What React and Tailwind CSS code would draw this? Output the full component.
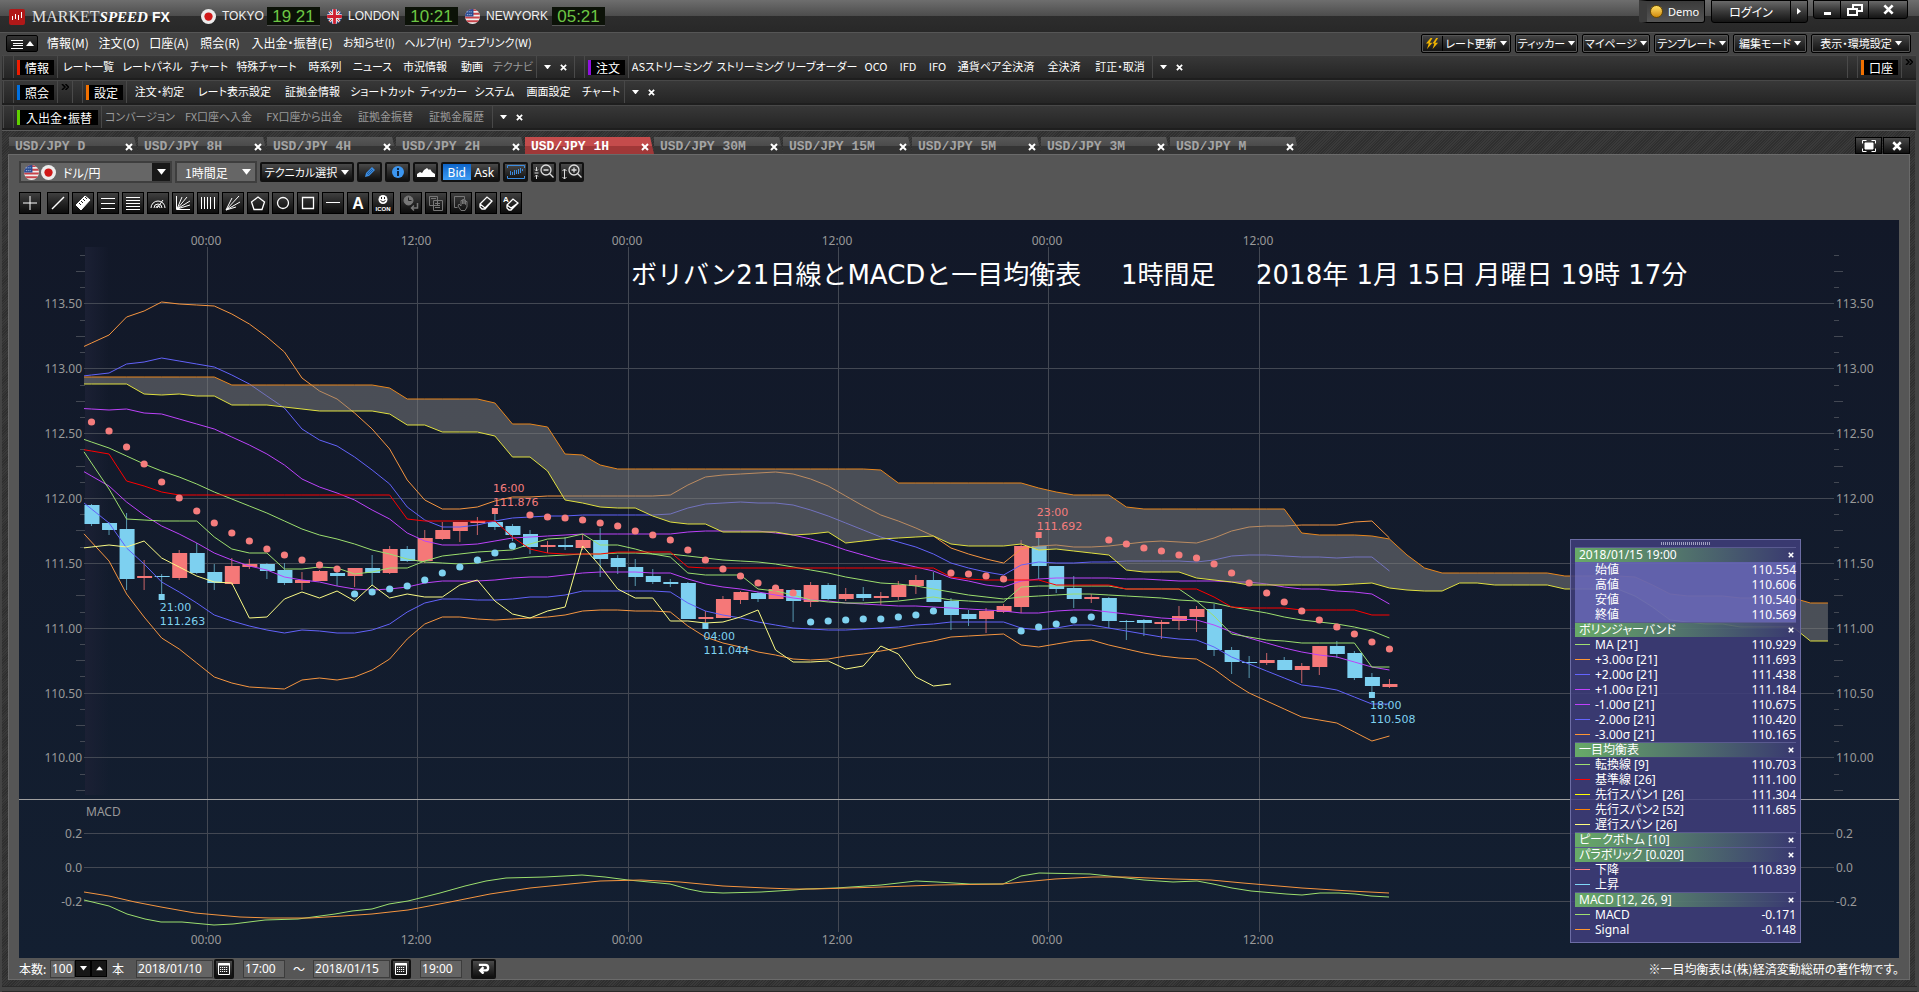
import React, { useState } from 'react';
import clsx from 'clsx';

const menus = [
  ['情報(M)', 'w-[52px]'],
  ['注文(O)', 'w-[50px]'],
  ['口座(A)', 'w-[50px]'],
  ['照会(R)', 'w-[52px]'],
  ['入出金・振替(E)', 'w-[92px]'],
  ['お知らせ(I)', 'w-[62px] text-[11px]'],
  ['ヘルプ(H)', 'w-[56px] text-[11px]'],
  ['ウェブリンク(W)', 'w-[77px] text-[11px]'],
];

const quickMenus = [
  ['ティッカー', 'w-[63px]'],
  ['マイページ', 'w-[68px]'],
  ['テンプレート', 'w-[75px]'],
  ['編集モード', 'w-[74px]'],
  ['表示・環境設定', 'w-[100px]'],
];

const infoItems = [
  ['レート一覧', 'w-[61px]'],
  ['レートパネル', 'w-[67px]'],
  ['チャート', 'w-[46px]'],
  ['特殊チャート', 'w-[69px]'],
  ['時系列', 'w-[48px]'],
  ['ニュース', 'w-[47px]'],
  ['市況情報', 'w-[58px]'],
  ['動画', 'w-[36px]'],
  ['テクナビ', 'w-[46px] text-[#9a9a9a]'],
];

const orderItems = [
  ['ASストリーミング', 'w-[86px]'],
  ['ストリーミング', 'w-[70px]'],
  ['リーブオーダー', 'w-[74px]'],
  ['OCO', 'w-[34px]'],
  ['IFD', 'w-[30px]'],
  ['IFO', 'w-[29px]'],
  ['通貨ペア全決済', 'w-[88px]'],
  ['全決済', 'w-[48px]'],
  ['訂正・取消', 'w-[64px]'],
];

const settingItems = [
  ['注文・約定', 'w-[65px]'],
  ['レート表示設定', 'w-[85px]'],
  ['証拠金情報', 'w-[71px]'],
  ['ショートカット', 'w-[69px]'],
  ['ティッカー', 'w-[53px]'],
  ['システム', 'w-[49px]'],
  ['画面設定', 'w-[59px]'],
  ['チャート', 'w-[46px]'],
];

const cashItems = [
  ['コンバージョン', 'w-[76px] text-[#9a9a9a]'],
  ['FX口座へ入金', 'w-[81px] text-[#9a9a9a]'],
  ['FX口座から出金', 'w-[91px] text-[#9a9a9a]'],
  ['証拠金振替', 'w-[71px] text-[#9a9a9a]'],
  ['証拠金履歴', 'w-[71px] text-[#9a9a9a]'],
];

const tabs = ['D', '8H', '4H', '2H', '1H', '30M', '15M', '5M', '3M', 'M'];

// Chart data, one value per hour
const bands = [
  {
    color: '#f59540',
    ys: [342, 334, 316, 310, 301, 303, 304, 305, 313, 323, 336, 351, 377, 390, 398, 412, 428, 448, 479, 499, 508, 508, 506, 500, 496, 496, 495, 495, 495, 495, 495, 495, 495, 494, 484, 476, 474, 473, 472, 471, 473, 478, 485, 495, 505, 514, 520, 527, 535, 547, 553, 558, 562, 548, 545, 544, 546, 546, 545, 543, 541, 540, 541, 542, 537, 530, 526, 525, 525, 524, 524, 524, 521, 520, 537],
  },
  {
    color: '#6262fa',
    ys: [374, 372, 363, 361, 357, 360, 363, 366, 374, 383, 395, 407, 428, 439, 445, 456, 469, 483, 506, 519, 526, 526, 524, 520, 517, 516, 515, 515, 514, 514, 514, 514, 514, 513, 507, 503, 502, 501, 502, 502, 504, 509, 515, 522, 529, 536, 541, 546, 553, 562, 567, 571, 574, 564, 561, 562, 562, 561, 561, 560, 560, 560, 560, 561, 559, 555, 554, 554, 555, 556, 556, 557, 556, 556, 570],
  },
  {
    color: '#bc42fa',
    ys: [408, 409, 408, 412, 413, 418, 423, 428, 436, 444, 453, 464, 478, 486, 492, 499, 509, 518, 532, 540, 544, 544, 543, 540, 537, 536, 535, 534, 533, 533, 533, 533, 533, 533, 531, 530, 530, 530, 530, 532, 534, 538, 543, 549, 554, 559, 562, 566, 570, 577, 580, 584, 586, 580, 578, 577, 577, 577, 577, 578, 578, 579, 580, 580, 580, 581, 581, 583, 586, 588, 588, 590, 591, 593, 603],
  },
  {
    color: '#9cde6e',
    ys: [441, 447, 455, 463, 470, 476, 483, 491, 498, 505, 512, 520, 528, 534, 538, 543, 549, 553, 558, 561, 562, 563, 562, 559, 558, 556, 555, 554, 553, 553, 552, 552, 553, 553, 555, 557, 559, 560, 561, 563, 566, 569, 572, 576, 579, 582, 583, 585, 588, 591, 594, 596, 598, 596, 595, 594, 593, 593, 594, 595, 596, 597, 599, 600, 602, 606, 609, 612, 616, 619, 621, 623, 626, 630, 637],
  },
  {
    color: '#bc42fa',
    ys: [475, 485, 501, 514, 525, 533, 542, 552, 559, 565, 569, 576, 579, 581, 585, 588, 589, 588, 586, 582, 580, 580, 580, 579, 577, 576, 576, 574, 572, 571, 571, 571, 572, 572, 578, 583, 586, 588, 591, 594, 597, 599, 600, 602, 603, 604, 605, 605, 606, 607, 608, 609, 610, 612, 612, 610, 609, 609, 611, 613, 615, 617, 618, 619, 624, 631, 637, 642, 647, 651, 654, 656, 661, 666, 669],
  },
  {
    color: '#6262fa',
    ys: [508, 522, 547, 563, 581, 591, 602, 614, 620, 625, 629, 632, 629, 630, 632, 632, 629, 623, 611, 602, 598, 598, 599, 599, 598, 596, 596, 594, 590, 590, 590, 590, 590, 591, 602, 610, 614, 617, 621, 624, 627, 628, 629, 629, 628, 627, 626, 624, 623, 621, 621, 621, 621, 627, 629, 627, 624, 624, 627, 630, 633, 636, 638, 639, 646, 656, 663, 670, 677, 684, 686, 689, 696, 703, 703],
  },
  {
    color: '#f59540',
    ys: [541, 560, 593, 616, 637, 648, 662, 676, 682, 686, 687, 688, 679, 677, 679, 676, 669, 658, 638, 623, 616, 616, 618, 619, 618, 617, 616, 614, 610, 609, 609, 610, 610, 611, 625, 636, 642, 646, 651, 654, 658, 659, 658, 655, 653, 650, 647, 643, 640, 636, 635, 634, 633, 644, 646, 643, 640, 639, 644, 648, 652, 655, 657, 658, 668, 681, 692, 700, 708, 716, 719, 722, 731, 740, 735],
  },
  {
    // 転換線
    color: '#9cde6e',
    ys: [462, 488, 518, 519, 520, 520, 520, 536, 548, 552, 552, 568, 568, 566, 567, 573, 571, 567, 567, 560, 555, 553, 551, 550, 549, 543, 538, 537, 533, 544, 544, 548, 553, 556, 572, 574, 574, 574, 588, 590, 594, 599, 601, 602, 602, 601, 600, 598, 596, 599, 600, 601, 601, 586, 585, 585, 585, 585, 585, 588, 588, 588, 588, 600, 615, 633, 636, 639, 640, 642, 642, 642, 642, 666, 666],
  },
  {
    // 基準線
    color: '#ff0000',
    ys: [450, 453, 480, 485, 491, 494, 494, 494, 494, 494, 494, 494, 494, 494, 494, 494, 494, 494, 518, 520, 520, 520, 520, 520, 536, 548, 552, 553, 553, 553, 551, 551, 551, 551, 566, 567, 567, 567, 567, 567, 567, 567, 567, 567, 567, 567, 567, 567, 567, 576, 578, 579, 579, 579, 579, 584, 584, 584, 584, 588, 588, 588, 588, 588, 596, 606, 607, 607, 607, 609, 609, 609, 609, 614, 614],
  },
  {
    // 遅行スパン
    color: '#fafa84',
    ys: [546, 544, 546, 540, 557, 566, 575, 581, 582, 617, 616, 598, 591, 597, 590, 600, 584, 597, 593, 596, 596, 584, 579, 600, 613, 617, 610, 606, 545, 565, 588, 597, 597, 620, 620, 622, 621, 616, 609, 649, 661, 661, 660, 668, 665, 645, 653, 676, 685, 683],
  },
];

const spanA = [383, 383, 383, 393, 394, 393, 395, 395, 404, 404, 404, 406, 408, 410, 410, 410, 410, 413, 424, 424, 431, 431, 431, 435, 456, 456, 470, 499, 502, 506, 507, 507, 515, 521, 523, 523, 531, 531, 531, 531, 534, 533, 531, 542, 540, 538, 537, 536, 535, 543, 545, 545, 545, 543, 549, 548, 550, 552, 554, 569, 571, 571, 571, 577, 579, 581, 584, 584, 584, 584, 584, 584, 583, 582, 587, 589, 590, 590, 582, 582, 584, 584, 584, 584, 588, 588, 588, 588, 595, 606, 619, 621, 623, 623, 626, 626, 626, 626, 640, 640];
const spanB = [376, 376, 376, 376, 376, 376, 376, 376, 384, 384, 384, 384, 384, 384, 384, 384, 384, 387, 398, 398, 398, 398, 398, 402, 423, 423, 426, 453, 454, 464, 468, 468, 468, 468, 468, 468, 468, 468, 468, 468, 468, 468, 468, 468, 468, 469, 482, 482, 482, 482, 482, 482, 482, 482, 487, 491, 494, 494, 494, 506, 508, 508, 508, 508, 508, 508, 508, 508, 508, 532, 534, 534, 534, 535, 538, 554, 567, 572, 572, 572, 572, 572, 572, 572, 575, 575, 575, 575, 576, 584, 593, 595, 595, 595, 597, 597, 597, 597, 602, 602];

// high, body top, body bottom, low, rising
const candles = [
  [503, 504, 523, 525, 0], [521, 522, 529, 534, 0], [512, 528, 578, 589, 0], [559, 575, 577, 589, 1], [573, 575, 576, 598, 0],
  [549, 552, 577, 579, 1], [542, 552, 572, 573, 0], [563, 571, 582, 589, 0], [557, 565, 583, 584, 1], [558, 563, 566, 568, 1],
  [562, 563, 570, 578, 0], [562, 569, 582, 584, 0], [571, 579, 582, 589, 1], [569, 570, 580, 580, 1], [571, 572, 575, 585, 0],
  [567, 567, 575, 586, 1], [554, 567, 572, 585, 0], [545, 548, 572, 573, 1], [545, 548, 560, 561, 0], [529, 537, 560, 562, 1],
  [521, 529, 538, 539, 1], [521, 521, 530, 541, 1], [516, 520, 522, 534, 1], [510, 521, 526, 529, 0], [523, 525, 534, 540, 0],
  [529, 533, 546, 553, 0], [540, 544, 546, 552, 1], [536, 544, 546, 549, 0], [533, 539, 547, 549, 1], [527, 539, 558, 576, 0],
  [554, 557, 566, 573, 0], [558, 566, 576, 585, 0], [568, 575, 581, 583, 0], [578, 581, 583, 586, 0], [581, 582, 618, 618, 0],
  [610, 616, 618, 622, 1], [595, 598, 617, 617, 1], [590, 591, 599, 603, 1], [591, 592, 598, 601, 0], [585, 588, 598, 598, 1],
  [589, 589, 600, 621, 0], [581, 584, 601, 606, 1], [582, 584, 598, 599, 0], [587, 593, 598, 600, 1], [586, 593, 597, 600, 0],
  [591, 595, 597, 604, 1], [580, 584, 596, 599, 1], [574, 579, 585, 593, 1], [571, 579, 601, 601, 0], [597, 600, 614, 629, 0],
  [609, 613, 618, 625, 0], [607, 610, 618, 632, 1], [603, 605, 611, 612, 1], [539, 545, 606, 612, 1], [537, 545, 565, 578, 0],
  [565, 565, 588, 592, 0], [575, 587, 598, 607, 0], [593, 596, 598, 602, 1], [596, 597, 620, 627, 0], [619, 620, 621, 639, 0],
  [618, 619, 622, 635, 0], [619, 621, 623, 638, 1], [605, 615, 620, 629, 1], [605, 608, 616, 631, 1], [603, 608, 649, 655, 0],
  [646, 649, 661, 673, 0], [655, 661, 662, 677, 0], [652, 659, 662, 664, 1], [656, 659, 669, 669, 0], [662, 665, 669, 682, 1],
  [645, 645, 666, 674, 1], [640, 645, 653, 657, 0], [650, 652, 677, 679, 0], [672, 676, 685, 692, 0], [678, 683, 686, 687, 1],
];

const sar = [
  { from: 0, color: '#f57d7d', ys: [421, 430, 446, 463, 481, 497, 510, 522, 532, 540, 548, 554, 559, 564, 568] },
  { from: 15, color: '#7fd2f0', ys: [593, 591, 588, 585, 579, 572, 566, 559, 552, 545] },
  { from: 25, color: '#f57d7d', ys: [514, 516, 517, 519, 522, 525, 530, 534, 539, 549, 559, 568, 575, 582, 587, 592] },
  { from: 41, color: '#7fd2f0', ys: [621, 620, 619, 618, 618, 616, 614, 610] },
  { from: 49, color: '#f57d7d', ys: [572, 573, 575, 578] },
  { from: 53, color: '#7fd2f0', ys: [630, 626, 623, 619, 616] },
  { from: 58, color: '#f57d7d', ys: [539, 543, 547, 550, 554, 557, 563, 572, 582, 592, 601, 610, 619, 626, 633, 641, 648] },
];

const peaks = [
  { i: 4, y: 596, time: '21:00', price: '111.263', color: '#7fd2f0', ty: 610 },
  { i: 23, y: 510, time: '16:00', price: '111.876', color: '#f57d7d', ty: 491 },
  { i: 35, y: 625, time: '04:00', price: '111.044', color: '#7fd2f0', ty: 639 },
  { i: 54, y: 534, time: '23:00', price: '111.692', color: '#f57d7d', ty: 515 },
  { i: 73, y: 694, time: '18:00', price: '110.508', color: '#7fd2f0', ty: 708 },
];

const macd = '84,899 109,905 127,913 145,918 161,921 182,921 214,924 233,923 265,919 298,918 335,913 352,910 372,908 389,903 408,900 440,892 465,885 486,880 506,877 545,876 582,874 605,876 628,879 670,883 688,888 703,891 723,892 761,891 793,889 806,888 836,887 881,884 916,880 937,881 970,883 1003,883 1021,875 1039,872 1090,873 1109,875 1144,879 1173,881 1197,880 1213,883 1232,887 1251,890 1286,893 1302,894 1320,892 1339,892 1355,893 1371,895 1389,896';
const signal = '84,891 109,895 135,901 161,906 195,912 240,916 270,917 310,917 343,915 372,913 408,909 450,901 490,893 530,887 570,883 600,880 641,879 680,881 723,885 766,887 793,888 814,888 881,886 937,884 1002,883 1055,878 1093,876 1125,876 1173,878 1211,879 1243,882 1302,887 1350,890 1389,892';

const hours = [
  [207, '00:00'],
  [417, '12:00'],
  [628, '00:00'],
  [838, '12:00'],
  [1048, '00:00'],
  [1259, '12:00'],
];
const prices = [
  [302, '113.50'],
  [367, '113.00'],
  [432, '112.50'],
  [497, '112.00'],
  [562, '111.50'],
  [627, '111.00'],
  [692, '110.50'],
  [756, '110.00'],
];
const macdLevels = [
  [832, '0.2'],
  [866, '0.0'],
  [900, '-0.2'],
];

const legend = [
  { head: '2018/01/15 19:00' },
  { name: '始値', value: '110.554', hot: true },
  { name: '高値', value: '110.606', hot: true },
  { name: '安値', value: '110.540', hot: true },
  { name: '終値', value: '110.569', hot: true },
  { head: 'ボリンジャーバンド' },
  { name: 'MA [21]', value: '110.929', line: 'bg-[#a0e070]' },
  { name: '+3.00σ [21]', value: '111.693', line: 'bg-[#ff9632]' },
  { name: '+2.00σ [21]', value: '111.438', line: 'bg-[#6464ff]' },
  { name: '+1.00σ [21]', value: '111.184', line: 'bg-[#c040ff]' },
  { name: '-1.00σ [21]', value: '110.675', line: 'bg-[#c040ff]' },
  { name: '-2.00σ [21]', value: '110.420', line: 'bg-[#6464ff]' },
  { name: '-3.00σ [21]', value: '110.165', line: 'bg-[#ff9632]' },
  { head: '一目均衡表' },
  { name: '転換線 [9]', value: '110.703', line: 'bg-[#a0e070]' },
  { name: '基準線 [26]', value: '111.100', line: 'bg-[#ff0000]' },
  { name: '先行スパン1 [26]', value: '111.304', line: 'bg-[#ffff00]' },
  { name: '先行スパン2 [52]', value: '111.685', line: 'bg-[#ff8000]' },
  { name: '遅行スパン [26]', value: '', line: 'bg-[#ffff80]' },
  { head: 'ピークボトム [10]' },
  { head: 'パラボリック [0.020]' },
  { name: '下降', value: '110.839', line: 'bg-[#ff8080]' },
  { name: '上昇', value: '', line: 'bg-[#80d8f8]' },
  { head: 'MACD [12, 26, 9]' },
  { name: 'MACD', value: '-0.171', line: 'bg-[#a0e070]' },
  { name: 'Signal', value: '-0.148', line: 'bg-[#ff9632]' },
];

const px = (i) => 91.5 + 17.54 * i;

const linePoints = (ys) => {
  const lead = `84,${ys[0] - (ys[1] - ys[0]) * 0.43}`;
  return [lead, ...ys.map((y, i) => `${px(i)},${y}`)].join(' ');
};

const cloudPoints = [
  `84,${spanB[0]}`,
  ...spanB.map((y, i) => `${px(i)},${y}`),
  ...spanA.map((y, i) => `${px(i)},${y}`).reverse(),
  `84,${spanA[0]}`,
].join(' ');

const Down = ({ className = 'w-[7px]' }) => (
  <svg viewBox="0 0 8 5" className={clsx('shrink-0', className)} aria-hidden="true">
    <path d="M0 0h8L4 5z" fill="currentColor" />
  </svg>
);

const Cross = ({ className = 'w-[8px]' }) => (
  <svg viewBox="0 0 8 8" className={clsx('shrink-0', className)} aria-hidden="true">
    <path d="M1 1l6 6M7 1L1 7" stroke="currentColor" strokeWidth="2" />
  </svg>
);

const FlagJp = () => (
  <svg viewBox="0 0 16 16" className="w-[15px] shrink-0" aria-hidden="true">
    <circle cx="8" cy="8" r="8" fill="#ececec" />
    <circle cx="8" cy="8" r="4.400" fill="#d01818" />
  </svg>
);

const FlagUs = () => (
  <svg viewBox="0 0 16 16" className="w-[15px] shrink-0" aria-hidden="true">
    <clipPath id="us">
      <circle cx="8" cy="8" r="8" />
    </clipPath>
    <g clipPath="url(#us)">
      <path d="M0 0h16v16H0z" fill="#eee" />
      <path d="M0 1h16M0 5h16M0 9h16M0 13h16" stroke="#c8434a" strokeWidth="2" />
      <path d="M0 0h9v8H0z" fill="#2a4d94" />
      <path d="M2 3h6M2 6h6" stroke="#cdd6ea" strokeDasharray="1 1" />
    </g>
  </svg>
);

const FlagUk = () => (
  <svg viewBox="0 0 16 16" className="w-[15px] shrink-0" aria-hidden="true">
    <clipPath id="uk">
      <circle cx="8" cy="8" r="8" />
    </clipPath>
    <g clipPath="url(#uk)">
      <path d="M0 0h16v16H0z" fill="#28427f" />
      <path d="M0 0l16 16M16 0L0 16" stroke="#ddd" strokeWidth="3" />
      <path d="M0 0l16 16M16 0L0 16" stroke="#c33" />
      <path d="M8 0v16M0 8h16" stroke="#eee" strokeWidth="5" />
      <path d="M8 0v16M0 8h16" stroke="#cf2030" strokeWidth="3" />
    </g>
  </svg>
);

const Clock = ({ flag, city, time, pitch }) => (
  <div className={clsx('flex items-center', pitch)}>
    {flag}
    <span className="ml-[6px] flex-1 font-['Liberation_Sans',sans-serif] text-[12px] text-[#f0f0f0]">{city}</span>
    <time className="h-[19px] w-[53px] whitespace-pre border-b border-[#555] bg-[#0c1208] text-center font-['Liberation_Sans',sans-serif] text-[17px] leading-[19px] text-[#6cc644]">
      {time}
    </time>
  </div>
);

const Grip = () => (
  <span className="h-[16px] w-[5px] shrink-0 bg-[radial-gradient(circle,#777_35%,transparent_40%)] bg-[length:2px_2px]" />
);

const Group = ({ title, bar, label, items, close, more }) => (
  <div className="flex h-full items-center border-l border-[#4a4a4a] pl-[2px]">
    <Grip />
    <div className="ml-[2px] flex h-full items-center border-x border-[#484848] px-[3px]">
      <span className={clsx('flex h-[15px] items-center justify-center border-l-[3px] bg-black text-[12px]', bar, label)}>
        {title}
      </span>
    </div>
    {items && <ToolItems items={items} />}
    {close && (
      <div className="flex h-full items-center gap-[9px] border-l border-[#484848] px-[7px]">
        <button aria-label="メニュー"><Down /></button>
        <button aria-label="閉じる"><Cross className="w-[7px]" /></button>
      </div>
    )}
    {more && (
      <button aria-label="さらに表示" className="flex h-full w-[14px] justify-center pt-[3px]">
        <svg viewBox="0 0 8 6" className="h-[6px] w-[8px]" fill="none" stroke="#000" strokeWidth="1.500">
          <path d="M1 0l3 3-3 3M4.500 0l3 3-3 3" />
        </svg>
      </button>
    )}
  </div>
);

const ToolItems = ({ items }) => (
  <>
    {items.map(([label, cls]) => (
      <button key={label} className={clsx('flex shrink-0 justify-center whitespace-nowrap pb-[2px]', cls)}>
        {label}
      </button>
    ))}
  </>
);

const ToolRow = ({ children }) => (
  <div className="flex h-[25px] items-center border-b-2 border-[#1e1e1e] border-t border-t-[#484848] bg-linear-to-b from-[#383838] to-[#252525] pl-[1px]">
    {children}
  </div>
);

const TopButton = ({ children, className }) => (
  <button
    className={clsx(
      'flex h-[19px] items-center justify-center gap-[3px] whitespace-nowrap rounded-[2px] border border-black bg-linear-to-b from-[#464646] to-[#111] shadow-[inset_0_0_0_1px_#555]',
      className
    )}
  >
    {children}
  </button>
);

const IconButton = ({ label, children, className = 'w-[25px]' }) => (
  <button
    aria-label={label}
    className={clsx(
      'flex h-[20px] items-center justify-center rounded-[2px] border-2 border-[#111] bg-linear-to-b from-[#4a4a4a] to-[#101010]',
      className
    )}
  >
    {children}
  </button>
);

const drawTools = [
  { name: '十字', path: <path d="M8 1v14M1 8h14" /> },
  { name: '直線', path: <path d="M2 14L14 2" strokeWidth="1.5" />, gap: true },
  {
    name: '定規',
    path: (
      <>
        <path d="M1 10L10 1l5 4-9 10z" fill="#fff" />
        <path d="M4 8l2 2M6 6l2 2M8 4l2 2M10 2l2 2" stroke="#222" />
      </>
    ),
  },
  { name: '3本線', path: <path d="M1 3.5h14M1 8.5h14M1 13.5h14" /> },
  { name: '5本線', path: <path d="M1 2.5h14M1 5.5h14M1 8.5h14M1 11.5h14M1 14.5h14" /> },
  { name: '円弧', path: <path d="M1 13a7 7 0 0 1 14 0M4 13a4 4 0 0 1 8 0M7 13L13 5M6 13a2 2 0 0 1 4 0" /> },
  { name: 'ファン', path: <path d="M1.500 1v13.500H15M2 14L7 2M2 14L12 2M2 14L15 6M2 14l13-4" /> },
  { name: '縦線', path: <path d="M1.500 2v12M4.500 2v12M7.500 2v12M10.500 2v12M14.500 2v12" /> },
  { name: '放射線', path: <path d="M1 15L7 3M1 15L14 1M1 15l14-8M1 15l10-3" /> },
  { name: '五角形', path: <path d="M8 2l6.500 5-2.500 7.500H4L1.500 7z" strokeWidth="1.3" /> },
  { name: '円', path: <circle cx="8" cy="8" r="5.500" strokeWidth="1.3" /> },
  { name: '四角形', path: <path d="M2.500 2.500h11v11h-11z" strokeWidth="1.3" /> },
  { name: '水平線', path: <path d="M1 7.500h14" /> },
  { name: '文字', text: 'A' },
  {
    name: 'アイコン',
    path: (
      <>
        <circle cx="8" cy="4.500" r="4.500" fill="#fff" stroke="none" />
        <path d="M5.500 5.500q2.500 3 5 0M6.500 2v2M9.500 2v2" stroke="#222" />
        <text x="8" y="16" fontSize="6" fontWeight="700" textAnchor="middle" fill="#fff" stroke="none">ICON</text>
      </>
    ),
  },
  {
    name: '履歴',
    gap: true,
    off: true,
    path: (
      <>
        <circle cx="5.500" cy="5.500" r="4.500" fill="#777" />
        <path d="M5.500 2.500v3h3" stroke="#222" />
        <path d="M14.500 8v5H9M11 10.500L8.500 13l2.500 2.500" strokeWidth="1.500" />
      </>
    ),
  },
  { name: 'コピー', off: true, path: <path d="M1.500 1.500h8v9h-8zM5.500 5.500h9v10h-9zM7 8.500h5M7 10.500h5M7 12.500h5M3 3.500h5" /> },
  { name: '移動', off: true, path: <path d="M1.500 1.500h10v3M1.500 1.500v11h3M6 9l2 2V5.500h1.500V9V4.500H11V9V5h1.500v4.500V6.500H14V12l-2 3.500H8L5 11z" /> },
  { name: '消去', path: <path d="M2 9l7-7 5 4-7 8H4l-2-2zM2 9l5 4 7-7" strokeWidth="1.3" /> },
  {
    name: '全消去',
    path: (
      <>
        <path d="M4 10l6-6 5 4-7 7H6l-2-2zM4 10l4 3 7-5" strokeWidth="1.3" />
        <text x="3" y="7" fontSize="8" fontWeight="700" textAnchor="middle" fill="#fff" stroke="none">A</text>
      </>
    ),
  },
];

const Calendar = () => (
  <svg viewBox="0 0 12 12" className="w-[12px]" aria-hidden="true">
    <path d="M.5.5h11v11H.5z" fill="none" stroke="#fff" />
    <path d="M0 1.500h12" stroke="#fff" strokeWidth="2" />
    <path d="M2 4.500h8M2 6.500h8M2 8.500h8" stroke="#fff" strokeDasharray="1.200 .8" />
  </svg>
);

const DateBox = ({ id, label, value, className }) => (
  <input
    id={id}
    aria-label={label}
    defaultValue={value}
    className={clsx(
      "h-[18px] border border-[#3c3c3c] bg-[#646464] px-px font-['Noto_Sans','Noto_Sans_CJK_JP',sans-serif] text-[12px] text-white",
      className
    )}
  />
);

const Chart = () => (
  <svg viewBox="19 219 1880 738" className="block h-auto w-full font-['Noto_Sans','Noto_Sans_CJK_JP',sans-serif] text-[12px] [font-feature-settings:normal]" role="img" aria-label="USD/JPY 1H">
    <defs>
      <linearGradient id="bg" x1="0" y1="0" x2="0" y2="1">
        <stop offset="0" stopColor="#121828" />
        <stop offset="1" stopColor="#131f31" />
      </linearGradient>
      <linearGradient id="edge">
        <stop offset="0" stopColor="#1b2034" />
        <stop offset="1" stopColor="#1b2034" stopOpacity="0" />
      </linearGradient>
    </defs>
    <rect x="19" y="219" width="1880" height="738" fill="url(#bg)" />
    <rect x="85" y="246" width="24" height="548" fill="url(#edge)" />

    {/* Grid */}
    <g stroke="#434853" shapeRendering="crispEdges">
      {hours.map(([x]) => (
        <line key={x} x1={x + 0.5} x2={x + 0.5} y1="246" y2="931" />
      ))}
      {[...prices, ...macdLevels].map(([y]) => (
        <line key={y} x1="84" x2="1834" y1={y + 0.5} y2={y + 0.5} />
      ))}
      {Array.from({ length: 34 }, (_, n) => n - 3)
        .filter((k) => k % 4 !== 0)
        .map((k) => {
          const y = Math.round(302.4 + 16.22 * k) + 0.5;
          const len = k % 2 === 0 ? 9 : 5;
          return <path key={k} d={`M85 ${y}h-${len}M1834 ${y}h${len}`} />;
        })}
    </g>
    <line x1="19" x2="1899" y1="798.5" y2="798.5" stroke="#a0a0a0" />

    {/* Axis labels */}
    <g fill="#999">
      {hours.map(([x, t]) => (
        <g key={x} textAnchor="middle">
          <text x={x - 1} y="244">{t}</text>
          <text x={x - 1} y="943">{t}</text>
        </g>
      ))}
      {[...prices, ...macdLevels].map(([y, t]) => (
        <g key={y}>
          <text x="82" y={y + 5} textAnchor="end">{t}</text>
          <text x="1836" y={y + 5}>{t}</text>
        </g>
      ))}
      <text x="86" y="815">MACD</text>
    </g>

    {/* Candles */}
    {candles.map(([high, top, bottom, low, up], i) => (
      <g key={i} fill={up ? '#f57878' : '#7dd0f0'} stroke={up ? '#c86468' : '#5898b0'}>
        <line x1={px(i)} x2={px(i)} y1={high} y2={low} />
        <rect x={px(i) - 7} y={top} width="15" height={Math.max(bottom - top, 1)} stroke="none" />
      </g>
    ))}

    {bands.map((b, n) => (
      <polyline key={n} points={linePoints(b.ys)} fill="none" stroke={b.color} />
    ))}

    {/* Ichimoku cloud */}
    <polygon points={cloudPoints} fill="#828282" fillOpacity="0.5" />
    <polyline points={linePoints(spanB)} fill="none" stroke="#e8861c" />
    <polyline points={linePoints(spanA)} fill="none" stroke="#e0e040" />

    {/* Parabolic SAR */}
    {sar.map((s) =>
      s.ys.map((y, n) => <circle key={`${s.from}-${n}`} cx={px(s.from + n)} cy={y} r="3.600" fill={s.color} />)
    )}

    {/* Peaks and bottoms */}
    {peaks.map((p) => (
      <g key={p.i} fill={p.color} className="font-['DejaVu_Sans',sans-serif] text-[11px]">
        <rect x={px(p.i) - 3} y={p.y - 3} width="6" height="6" />
        <text x={px(p.i) - 2} y={p.ty}>{p.time}</text>
        <text x={px(p.i) - 2} y={p.ty + 14}>{p.price}</text>
      </g>
    ))}

    <polyline points={macd} fill="none" stroke="#9cde6e" />
    <polyline points={signal} fill="none" stroke="#f59540" />

    <g fill="#fff" className="font-['DejaVu_Sans','Noto_Sans_CJK_JP',sans-serif] text-[26px]">
      <text x="631" y="283">ボリバン21日線とMACDと一目均衡表</text>
      <text x="1121" y="283">1時間足</text>
      <text x="1256" y="283">2018年 1月 15日 月曜日 19時 17分</text>
    </g>
  </svg>
);

const Legend = () => (
  <aside className="absolute top-[319px] right-[98px] w-[231px] border border-[#6c6ca4] bg-[#3f3e7a]/88 px-[4px] pb-[5px] font-['Noto_Sans','Noto_Sans_CJK_JP',sans-serif] text-[12px] text-white">
    <div className="flex h-[7px] items-center justify-center">
      <span className="h-[3px] w-[49px] bg-[repeating-linear-gradient(90deg,#a0a0c0_0_1px,transparent_1px_2px)]" />
    </div>
    {legend.map((row) =>
      row.head ? (
        <div key={row.head} className="flex h-[15px] items-center justify-between border-t border-[#5a5a90] bg-linear-to-r from-[#68aa68] to-[#3f3e7a]/0 pr-[2px] pl-[4px] leading-[14px]">
          <span className="[font-feature-settings:'palt']">{row.head}</span>
          <button aria-label="閉じる"><Cross className="w-[6px]" /></button>
        </div>
      ) : (
        <div key={row.name} className={clsx('flex h-[15px] items-center leading-[15px]', row.hot && 'bg-[#8484dc]/55')}>
          <span className={clsx('mr-[5px] h-px w-[15px]', row.line)} />
          <span className="flex-1 [font-feature-settings:'palt']">{row.name}</span>
          <span>{row.value}</span>
        </div>
      )
    )}
  </aside>
);

const App = () => {
  const [side, setSide] = useState('Bid');
  const [active, setActive] = useState('1H');

  return (
    <div className="flex min-h-screen flex-col overflow-hidden bg-[#444] font-['Noto_Sans_CJK_JP',sans-serif] text-[11px] leading-[15px] text-white [font-feature-settings:'palt']">
      {/* Title bar */}
      <header className="flex h-[33px] justify-between border-b border-[#565656] bg-[linear-gradient(#6e6e6e,#4c4c4c_16px,#2d2d2d_16px,#282828)]">
        <div className="flex items-center pt-[1px] pl-[9px]">
          <svg viewBox="0 0 16 16" className="w-[16px]" aria-hidden="true">
            <rect width="16" height="16" rx="2" fill="#b01818" />
            <path d="M3.500 7v4M6.500 5v5M9.500 6v5M12.500 3v6" stroke="#fff" />
          </svg>
          <h1 className="ml-[7px] flex w-[162px] items-baseline whitespace-nowrap font-['Liberation_Serif',serif] text-[16px] text-[#e4e4e4]">
            MARKET
            <em className="text-[15px] font-bold text-white">SPEED</em>
            <b className="ml-[4px] font-['Liberation_Sans',sans-serif] text-[14px] text-white">FX</b>
          </h1>
          <div className="ml-[7px] flex gap-[7px]">
            <Clock flag={<FlagJp />} city="TOKYO" time="19 21" pitch="w-[119px]" />
            <Clock flag={<FlagUk />} city="LONDON" time="10:21" pitch="w-[131px]" />
            <Clock flag={<FlagUs />} city="NEWYORK" time="05:21" pitch="w-[140px]" />
          </div>
        </div>
        <div className="flex items-start pr-[11px]">
          <button className="flex h-[23px] w-[66px] items-center gap-[5px] rounded-b-[3px] border border-black border-l-[8px] border-l-[#3c3c3c] bg-linear-to-b from-[#3a3a3a] to-[#555] pl-[3px] font-['Noto_Sans',sans-serif]">
            <span className="h-[13px] w-[13px] rounded-full border border-[#6b4a00] bg-linear-to-b from-[#ffe060] to-[#d08a00]" />
            Demo
          </button>
          <div className="ml-[6px] flex h-[23px] w-[97px] rounded-b-[3px] border border-black bg-linear-to-b from-[#6a6a6a] via-[#3a3a3a] to-[#151515]">
            <button className="flex-1 text-[12px]">ログイン</button>
            <button aria-label="ログインメニュー" className="flex w-[17px] items-center justify-center border-l border-black">
              <svg viewBox="0 0 5 8" className="w-[4px]"><path d="M0 0l5 4-5 4z" fill="#fff" /></svg>
            </button>
          </div>
          <div className="ml-[5px] flex h-[19px] rounded-b-[3px] border border-black bg-linear-to-b from-[#6a6a6a] via-[#3a3a3a] to-[#151515]">
            <button aria-label="最小化" className="flex w-[27px] items-end justify-center border-r border-black pb-[3px]">
              <span className="h-[3px] w-[7px] bg-white" />
            </button>
            <button aria-label="元に戻す" className="flex w-[28px] items-center justify-center border-r border-black">
              <svg viewBox="0 0 16 12" className="w-[16px]" fill="none" stroke="#fff" strokeWidth="2">
                <path d="M6 4V1h9v6h-4M1 5h9v6H1z" />
              </svg>
            </button>
            <button aria-label="閉じる" className="flex w-[38px] items-center justify-center">
              <Cross className="w-[11px]" />
            </button>
          </div>
        </div>
      </header>

      {/* Menu bar */}
      <nav className="flex h-[22px] items-center justify-between pr-[8px] pl-[6px]">
        <div className="flex items-center pb-px text-[12px]">
          <button aria-label="メニュー" className="mr-[4px] flex h-[17px] w-[32px] items-center justify-center gap-[3px] rounded-[2px] border border-black bg-linear-to-b from-[#333] to-[#111]">
            <svg viewBox="0 0 12 10" className="w-[12px]" stroke="#fff">
              <path d="M0 1.500h12M2 4.500h10M2 6.500h10M0 9.500h12" />
            </svg>
            <Down className="w-[8px] rotate-180" />
          </button>
          <ToolItems items={menus} />
        </div>
        <div className="flex gap-[4px] pb-px">
          <TopButton className="w-[90px]">
            <svg viewBox="0 0 14 12" className="w-[13px]" fill="#f0b400">
              <path d="M5 0L0 6h3l-2 6 6-7H4l3-5zM11 0L7 6h2l-2 6 6-7h-3l3-5z" />
            </svg>
            <span className="border-l border-black pl-[3px]">レート更新</span>
            <Down />
          </TopButton>
          {quickMenus.map(([label, cls]) => (
            <TopButton key={label} className={cls}>
              {label}
              <Down />
            </TopButton>
          ))}
        </div>
      </nav>

      {/* Toolbars */}
      <div className="pr-[3px] pl-[2px]">
        <ToolRow>
          <Group title="情報" bar="border-[#ee1c00]" label="w-[37px]" items={infoItems} close />
          <Group title="注文" bar="border-[#9010e0]" label="w-[37px]" items={orderItems} close />
          <div className="flex-1" />
          <Group title="口座" bar="border-[#f07000]" label="w-[37px]" more />
        </ToolRow>
        <ToolRow>
          <Group title="照会" bar="border-[#0070e0]" label="w-[37px]" more />
          <Group title="設定" bar="border-[#f07000]" label="w-[37px]" items={settingItems} close />
        </ToolRow>
        <ToolRow>
          <Group title="入出金・振替" bar="border-[#60d000]" label="w-[81px]" items={cashItems} close />
        </ToolRow>
      </div>

      {/* Chart window */}
      <main className="mr-[4px] ml-[2px] flex-1 border-t border-[#5a5a5a] bg-[#383838] bg-[repeating-linear-gradient(135deg,#2f2f2f_0_1px,#3a3a3a_1px_2px)] pr-[5px] pb-[6px] pl-[6px]">
        <div className="flex h-[23px] items-end justify-between">
          <div role="tablist" className="flex pl-[1px]">
            {tabs.map((t) => (
              <div
                key={t}
                className={clsx(
                  'flex h-[17px] w-[129px] items-center justify-between pt-[2px] pr-[5px] pl-[6px] [clip-path:polygon(0_0,97%_0,100%_100%,0_100%)]',
                  t === active
                    ? 'bg-[linear-gradient(#c44c4c_50%,#a03838_50%)] text-white'
                    : 'bg-[linear-gradient(#585858,#4a4a4a_55%,#343434_55%)] text-[#a4a4a4]'
                )}
              >
                <button
                  role="tab"
                  aria-selected={t === active}
                  onClick={() => setActive(t)}
                  className="whitespace-nowrap font-['Liberation_Mono',monospace] text-[13px] font-bold"
                >
                  USD/JPY {t}
                </button>
                <button aria-label="タブを閉じる" className="text-white"><Cross /></button>
              </div>
            ))}
          </div>
          <div className="flex gap-px">
            <button aria-label="最大化" className="flex h-[17px] w-[27px] items-center justify-center border border-black bg-linear-to-b from-[#4a4a4a] to-[#101010]">
              <svg viewBox="0 0 14 12" className="w-[14px]" fill="none" stroke="#fff">
                <path d="M4.500.5h-4v3M9.500.5h4v3M4.500 11.500h-4v-3M9.500 11.500h4v-3" />
                <path d="M3 3h8v6H3z" fill="#fff" />
              </svg>
            </button>
            <button aria-label="閉じる" className="flex h-[17px] w-[27px] items-center justify-center border border-black bg-linear-to-b from-[#4a4a4a] to-[#101010]">
              <Cross className="w-[10px]" />
            </button>
          </div>
        </div>

        <section className="border border-[#6a6a6a] bg-[#565656] px-[10px]">
          <div className="flex items-center gap-[3px] pt-[6px]">
            <label className="flex h-[22px] w-[153px] items-center gap-[2px] border-2 border-[#3e3e3e] bg-[#666] pl-[3px]">
              <FlagUs />
              <FlagJp />
              <select aria-label="通貨ペア" className="ml-[5px] flex-1 appearance-none bg-transparent text-[12px] outline-none">
                <option>ドル/円</option>
              </select>
              <span className="flex h-full w-[18px] items-center justify-center bg-[#181818]">
                <Down className="w-[9px]" />
              </span>
            </label>
            <label className="flex h-[22px] w-[82px] items-center border-2 border-[#3e3e3e] bg-[#666] pr-[4px] pl-[8px]">
              <select aria-label="足種" className="w-[54px] flex-1 appearance-none bg-transparent text-[12px] outline-none">
                <option>1時間足</option>
              </select>
              <Down className="w-[9px]" />
            </label>
            <IconButton label="テクニカル選択" className="w-[94px] gap-[4px] whitespace-nowrap">
              テクニカル選択
              <Down className="w-[8px]" />
            </IconButton>
            <IconButton label="描画">
              <svg viewBox="0 0 12 12" className="w-[12px]">
                <path d="M1 11l1-4 6-6 3 3-6 6z" fill="#3c8ce0" />
                <path d="M3 8l5-5M4 9l5-5" stroke="#134a86" strokeWidth=".7" />
              </svg>
            </IconButton>
            <IconButton label="情報">
              <svg viewBox="0 0 12 12" className="w-[12px]">
                <circle cx="6" cy="6" r="6" fill="#3c96f0" />
                <path d="M5 5h2v5H5zM5 2h2v2H5z" fill="#0c2440" />
              </svg>
            </IconButton>
            <IconButton label="エリア">
              <svg viewBox="0 0 18 9" className="w-[18px]">
                <path d="M0 9V6l3-2 2 1 2-3 3-2 2 2 1-1 2 3 3 2v3z" fill="#fff" />
              </svg>
            </IconButton>
            <div className="flex h-[20px] w-[59px] rounded-[2px] border-2 border-[#111] font-['Noto_Sans',sans-serif] text-[12px]">
              {['Bid', 'Ask'].map((s) => (
                <button
                  key={s}
                  onClick={() => setSide(s)}
                  className={clsx('flex-1', side === s ? 'bg-linear-to-b from-[#0c64c8] to-[#3c9cf4]' : 'bg-linear-to-b from-[#4a4a4a] to-[#101010]')}
                >
                  {s}
                </button>
              ))}
            </div>
            <IconButton label="全体表示">
              <svg viewBox="0 0 18 14" className="w-[18px]" fill="none" stroke="#3c8ce0">
                <path d="M.5 3V.5h17V3M.5 11v2.500h17V11M3.500 6v4M5.500 7v3M7.500 5v5M9.500 5v4M11.500 4v5M13.500 3v5M15.500 4v2" />
              </svg>
            </IconButton>
            <IconButton label="縮小">
              <svg viewBox="0 0 20 16" className="w-[20px]" fill="none" stroke="#ddd">
                <circle cx="12" cy="6" r="5" strokeWidth="1.300" />
                <path d="M9.500 6h5M15.500 9.500l4 4" strokeWidth="1.300" />
                <path d="M2.500 3v4M1 5.500L2.500 7 4 5.500M.5 9h4M2.500 15v-4M1 12.500L2.500 11 4 12.500" />
              </svg>
            </IconButton>
            <IconButton label="拡大">
              <svg viewBox="0 0 20 16" className="w-[20px]" fill="none" stroke="#ddd">
                <circle cx="12" cy="6" r="5" strokeWidth="1.300" />
                <path d="M9.500 6h5M12 3.500v5M15.500 9.500l4 4" strokeWidth="1.300" />
                <path d="M2.500 5v10M.5 7l2-2 2 2M.5 13l2 2 2-2" />
              </svg>
            </IconButton>
          </div>

          <div className="flex gap-[3px] pt-[9px] pb-[6px]">
            {drawTools.map((tool) => (
              <button
                key={tool.name}
                aria-label={tool.name}
                disabled={tool.off}
                className={clsx(
                  "flex h-[22px] w-[22px] items-center justify-center border border-black bg-linear-to-b from-[#404040] to-[#0c0c0c] font-['Liberation_Sans',sans-serif] text-[16px] font-bold",
                  tool.gap && 'ml-[3px]'
                )}
              >
                {tool.text || (
                  <svg viewBox="0 0 16 16" className="w-[16px]" fill="none" stroke={tool.off ? '#777' : '#fff'}>
                    {tool.path}
                  </svg>
                )}
              </button>
            ))}
          </div>

          <div className="relative">
            <Chart />
            <Legend />
          </div>

          <footer className="flex h-[21px] items-center text-[12px]">
            <label htmlFor="bars" className="w-[31px]">本数:</label>
            <DateBox id="bars" value="100" className="w-[25px]" />
            <button aria-label="減らす" className="flex h-[17px] w-[16px] items-center justify-center border border-black bg-[#161616]"><Down className="w-[7px]" /></button>
            <button aria-label="増やす" className="flex h-[17px] w-[16px] items-center justify-center border border-black bg-[#161616]"><Down className="w-[7px] rotate-180" /></button>
            <span className="mr-[12px] ml-[5px]">本</span>
            <DateBox label="開始日" value="2018/01/10" className="w-[77px]" />
            <IconButton label="開始日カレンダー" className="ml-px w-[20px]"><Calendar /></IconButton>
            <DateBox label="開始時刻" value="17:00" className="ml-[9px] w-[42px]" />
            <span className="w-[28px] text-center">～</span>
            <DateBox label="終了日" value="2018/01/15" className="w-[77px]" />
            <IconButton label="終了日カレンダー" className="ml-px w-[20px]"><Calendar /></IconButton>
            <DateBox label="終了時刻" value="19:00" className="ml-[9px] w-[42px]" />
            <IconButton label="更新" className="ml-[9px] w-[25px]">
              <svg viewBox="0 0 14 12" className="w-[13px]" fill="none" stroke="#fff" strokeWidth="2.500">
                <path d="M2 2h7a3 3 0 0 1 0 6H4M7 4.500L3.500 8 7 11.500" />
              </svg>
            </IconButton>
            <span className="ml-auto">※一目均衡表は(株)経済変動総研の著作物です。</span>
          </footer>
        </section>
      </main>
      <div className="mx-[2px] h-[6px] border-y border-[#2a2a2a] bg-[#444]" />
    </div>
  );
};

export default App;
